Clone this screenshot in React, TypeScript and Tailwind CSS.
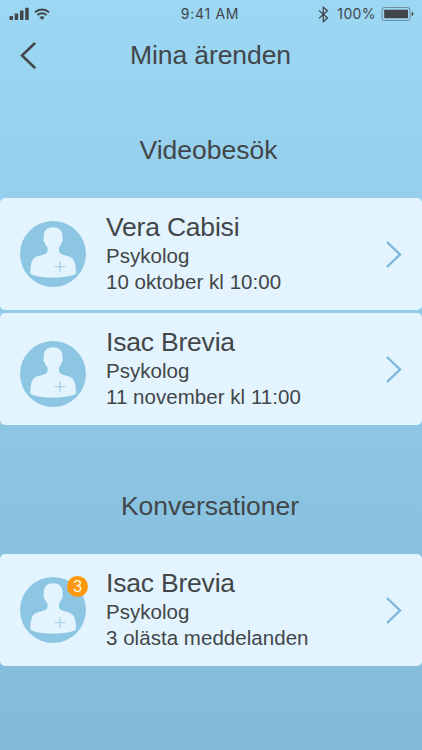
interface Visit {
  id: number;
  name: string;
  role: string;
  info: string;
  unread?: number;
  avatarClass: string;
}

const videoVisits: Visit[] = [
  { id: 1, name: "Vera Cabisi", role: "Psykolog", info: "10 oktober kl 10:00", avatarClass: "mt-[23px]" },
  { id: 2, name: "Isac Brevia", role: "Psykolog", info: "11 november kl 11:00", avatarClass: "mt-[28px]" },
];

const conversations: Visit[] = [
  {
    id: 3,
    name: "Isac Brevia",
    role: "Psykolog",
    info: "3 olästa meddelanden",
    unread: 3,
    avatarClass: "mt-[23px]",
  },
];

const StatusBar = () => (
  <div className="grid h-7 grid-cols-3 items-center pr-2 pl-[9px] font-[Inter,sans-serif] leading-7">
    <div className="flex items-center gap-[5px]">
      <svg width="20" height="14" viewBox="0 0 20 14" fill="currentColor">
        <rect x="0.5" y="9" width="3.5" height="4" rx="0.7" />
        <rect x="5.7" y="6.5" width="3.5" height="6.5" rx="0.7" />
        <rect x="11" y="3.5" width="3.5" height="9.5" rx="0.7" />
        <rect x="16.2" y="0.8" width="3.5" height="12.2" rx="0.7" />
      </svg>
      <svg width="16" height="13" viewBox="0 0 16 13" fill="none" stroke="currentColor" strokeWidth="1.9">
        <path d="M0.9 4.4C4.9 0.6 11.1 0.6 15.1 4.4" />
        <path d="M3.4 7.1C6 4.7 10 4.7 12.6 7.1" />
        <path d="M5.4 9.3C6.9 8 9.1 8 10.6 9.3L8 12Z" fill="currentColor" stroke="none" />
      </svg>
    </div>
    <span className="-ml-[3px] text-center text-[14px] tracking-[0.7px] whitespace-nowrap">9:41 AM</span>
    <div className="flex items-center justify-end">
      <svg className="mr-[7px]" width="11" height="17" viewBox="0 0 11 17" fill="none" stroke="currentColor" strokeWidth="1.3">
        <path d="M0 4.5L8.5 12L4.3 15.6V1.2L8.5 4.8L0 12.3" />
      </svg>
      <span className="mr-[5px] text-[14px] tracking-[0.4px]">100%</span>
      <svg width="33" height="14" viewBox="0 0 33 14">
        <rect x="1" y="0.5" width="28" height="13" rx="2.5" fill="none" stroke="currentColor" strokeOpacity="0.5" />
        <rect x="3.2" y="2.8" width="23.8" height="8.4" rx="0.5" fill="currentColor" />
        <path d="M30.7 5C32.9 5.6 32.9 8.4 30.7 9Z" fill="currentColor" />
      </svg>
    </div>
  </div>
);

const Avatar = ({ unread }: { unread?: number }) => (
  <div className="relative h-[66px] w-[66px]">
    <svg width="66" height="66" viewBox="0 0 66 66">
      <circle cx="33" cy="33" r="33" fill="#8dc6e3" />
      <path
        d="M33 6.2C27.3 6.2 23.8 9.5 23.8 14.5V17.2C23 17.8 23.4 20.6 24.7 21.7C25.3 23.6 26.3 25.2 27.6 26.3V29.2C27.6 32.6 24 33.6 18.5 35C12.5 36.6 10.4 40.5 10.4 52.7C20 57.9 46 57.9 56 52.7C56 40.5 53.5 36.6 47.5 35C42 33.6 39 32.6 39 29.2V26.3C40.2 25.2 41 23.6 41.6 21.7C42.9 20.6 43.2 17.8 42.4 17.2V14.5C42.4 9.5 38.7 6.2 33 6.2Z"
        fill="#e3f4ff"
      />
      <path d="M40 40.5V51M34.7 45.7H45.3" stroke="#a9d4ea" strokeWidth="1.3" />
    </svg>
    {unread && (
      <span className="absolute -top-[1px] left-[47px] h-[21px] w-[21px] rounded-full bg-[#fd980c] text-center text-[16.5px] leading-[21px] text-[#fff3df]">
        {unread}
      </span>
    )}
  </div>
);

const VisitCard = ({ visit }: { visit: Visit }) => (
  <div className="flex h-28 items-center rounded-[5px] bg-[#e3f4ff] pr-5 pl-5">
    <div className={`shrink-0 self-start ${visit.avatarClass}`}>
      <Avatar unread={visit.unread} />
    </div>
    <div className="ml-5 flex-1 text-[20.5px] leading-[26.5px] tracking-[0.04px]">
      <h3 className="-mt-[1px] mb-[1px] text-[26.5px] leading-[30px] tracking-[-0.2px]">{visit.name}</h3>
      <p>{visit.role}</p>
      <p>{visit.info}</p>
    </div>
    <svg width="16" height="27" viewBox="0 0 16 27" fill="none" stroke="#7cb7dc" strokeWidth="2.4">
      <path d="M1 1L14 13.5L1 26" />
    </svg>
  </div>
);

export default function App() {
  return (
    <div className="h-[750px] w-full overflow-hidden bg-linear-to-b from-[#9cd7f4] to-[#82bad8] font-['Liberation_Sans',Arial,sans-serif] text-[#424649]">
      <StatusBar />
      <header className="grid h-[55px] grid-cols-[60px_1fr_60px] items-center">
        <button className="ml-5 w-4">
          <svg width="16" height="27" viewBox="0 0 16 27" fill="none" stroke="currentColor" strokeWidth="2.5" strokeLinecap="round">
            <path d="M14.5 1.5L2 13.5L14.5 25.5" />
          </svg>
        </button>
        <h1 className="-mt-[2px] pr-[1px] text-center text-[26.5px] leading-8 tracking-[-0.1px]">Mina ärenden</h1>
      </header>

      <section className="pt-[51px]">
        <h2 className="pr-[5px] text-center text-[26.5px] leading-8">Videobesök</h2>
        <div className="mt-8 flex flex-col gap-[3px]">
          {videoVisits.map(visit => (
            <VisitCard key={visit.id} visit={visit} />
          ))}
        </div>
      </section>

      <section className="pt-[65px]">
        <h2 className="pr-[2px] text-center text-[26.5px] leading-8">Konversationer</h2>
        <div className="mt-8">
          {conversations.map(visit => (
            <VisitCard key={visit.id} visit={visit} />
          ))}
        </div>
      </section>
    </div>
  );
}
